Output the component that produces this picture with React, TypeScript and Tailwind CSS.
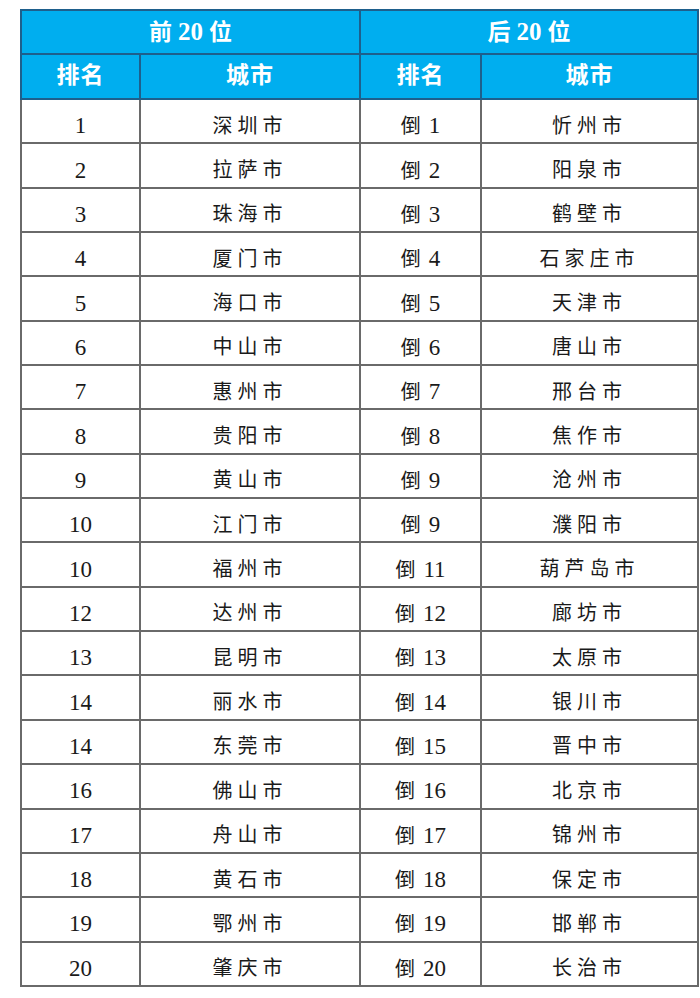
import React from 'react'

const top = [
  ['1', '深圳市'], ['2', '拉萨市'], ['3', '珠海市'], ['4', '厦门市'], ['5', '海口市'],
  ['6', '中山市'], ['7', '惠州市'], ['8', '贵阳市'], ['9', '黄山市'], ['10', '江门市'],
  ['10', '福州市'], ['12', '达州市'], ['13', '昆明市'], ['14', '丽水市'], ['14', '东莞市'],
  ['16', '佛山市'], ['17', '舟山市'], ['18', '黄石市'], ['19', '鄂州市'], ['20', '肇庆市'],
]

const bottom = [
  ['1', '忻州市'], ['2', '阳泉市'], ['3', '鹤壁市'], ['4', '石家庄市'], ['5', '天津市'],
  ['6', '唐山市'], ['7', '邢台市'], ['8', '焦作市'], ['9', '沧州市'], ['9', '濮阳市'],
  ['11', '葫芦岛市'], ['12', '廊坊市'], ['13', '太原市'], ['14', '银川市'], ['15', '晋中市'],
  ['16', '北京市'], ['17', '锦州市'], ['18', '保定市'], ['19', '邯郸市'], ['20', '长治市'],
]

const font = { fontFamily: '"Liberation Serif", "Noto Sans CJK SC", serif' }

export default function App() {
  const head = 'bg-[#00aeef] border-2 border-[#1e5f8c] text-white font-bold text-[23px] text-center align-middle'
  const cell = 'border-2 border-[#6a6a6a] text-[#1a1a1a] text-[20px] text-center align-middle pt-[9px] leading-none'

  return (
    <div className="w-[700px] h-[998px] bg-white pt-[9px] pl-[20px]" style={font}>
      <table className="border-collapse table-fixed w-[677px]">
        <colgroup>
          <col className="w-[119px]" />
          <col className="w-[220px]" />
          <col className="w-[121px]" />
          <col className="w-[217px]" />
        </colgroup>
        <thead>
          <tr className="h-[44px]">
            <th colSpan={2} className={head}>
              前<span className="text-[25px] mx-[6px]">20</span>位
            </th>
            <th colSpan={2} className={head}>
              后<span className="text-[25px] mx-[6px]">20</span>位
            </th>
          </tr>
          <tr className="h-[45px]">
            <th className={head + ' tracking-[1px]'}>排名</th>
            <th className={head + ' tracking-[1px]'}>城市</th>
            <th className={head + ' tracking-[1px]'}>排名</th>
            <th className={head + ' tracking-[1px]'}>城市</th>
          </tr>
        </thead>
        <tbody>
          {top.map((r, i) => (
            <tr key={i} className="h-[44.35px]">
              <td className={cell + ' text-[23px]'}>{r[0]}</td>
              <td className={cell + ' tracking-[5px]'}>{r[1]}</td>
              <td className={cell}>
                倒<span className="text-[23px] ml-[8px]">{bottom[i][0]}</span>
              </td>
              <td className={cell + ' tracking-[5px]'}>{bottom[i][1]}</td>
            </tr>
          ))}
        </tbody>
      </table>
    </div>
  )
}
